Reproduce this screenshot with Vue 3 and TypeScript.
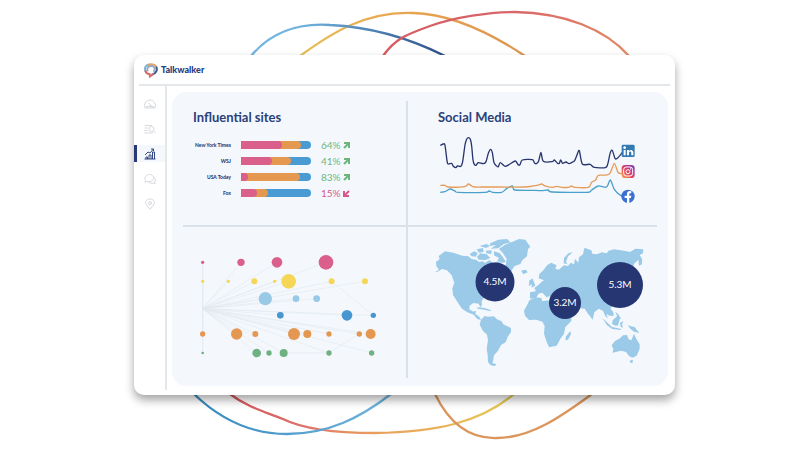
<script setup lang="ts">
type Point = [number, number]

interface Site {
  name: string
  first: number
  second: number
  share: string
  up: boolean
}

interface Dot {
  x: number
  y: number
  r: number
  tone: string
}

const sites: Site[] = [
  { name: 'New York Times', first: 58, second: 85, share: '64%', up: true },
  { name: 'WSJ', first: 44, second: 72, share: '41%', up: true },
  { name: 'USA Today', first: 10, second: 84, share: '83%', up: true },
  { name: 'Fox', first: 23, second: 39, share: '15%', up: false },
]

function parse(source: string): Point[] {
  return source.split(' ').map((pair) => pair.split(',').map(Number) as Point)
}

// Catmull-Rom spline through every point
function smooth(source: string): string {
  const p = parse(source)
  let d = `M${p[0][0]} ${p[0][1]}`
  for (let i = 0; i < p.length - 1; i++) {
    const a = p[Math.max(i - 1, 0)]
    const b = p[i]
    const c = p[i + 1]
    const e = p[Math.min(i + 2, p.length - 1)]
    d += `C${b[0] + (c[0] - a[0]) / 7} ${b[1] + (c[1] - a[1]) / 7} ${c[0] - (e[0] - b[0]) / 7} ${c[1] - (e[1] - b[1]) / 7} ${c[0]} ${c[1]}`
  }
  return d
}

const trends = [
  {
    tone: 'sky',
    d: smooth('46,277 60,275 75,267 90,273 100,277 180,277 192,273 203,277 230,277 245,266 262,258 270,270 330,271 350,272 370,270 382,276 485,277 500,270 520,258 545,261 556,240 568,268 585,285 600,292'),
  },
  {
    tone: 'orange',
    d: smooth('46,256 60,256 70,261 118,260 130,252 140,258 150,261 190,261 300,261 335,256 350,252 360,258 380,262 395,259 410,262 430,262 440,258 450,262 490,262 500,247 512,240 520,226 552,223 568,191 580,218 600,221'),
  },
  {
    tone: 'navy',
    d: smooth('46,136 55,132 60,136 66,182 69,192 80,190 85,199 93,203 97,198 108,199 113,185 120,135 125,118 130,113 136,118 140,138 144,180 148,193 153,196 160,188 175,191 183,185 190,160 197,148 202,158 207,188 215,198 220,200 226,188 240,199 255,192 271,183 280,195 285,194 292,180 322,179 328,188 334,191 341,183 348,157 355,184 382,185 388,180 398,190 403,190 407,180 413,190 423,186 432,191 443,186 449,182 456,165 463,152 472,192 495,193 508,202 541,203 548,193 556,158 562,151 570,175 578,174 594,155'),
  },
]

const dots: Dot[] = [
  { x: 38, y: 49, r: 5, tone: 'pink' },
  { x: 153, y: 49, r: 11, tone: 'pink' },
  { x: 261, y: 49, r: 16, tone: 'pink' },
  { x: 408, y: 49, r: 22, tone: 'pink' },
  { x: 38, y: 106, r: 5, tone: 'yellow' },
  { x: 115, y: 106, r: 5, tone: 'yellow' },
  { x: 193, y: 106, r: 9, tone: 'yellow' },
  { x: 254, y: 106, r: 5, tone: 'yellow' },
  { x: 296, y: 106, r: 22, tone: 'yellow' },
  { x: 425, y: 106, r: 9, tone: 'yellow' },
  { x: 525, y: 106, r: 9, tone: 'yellow' },
  { x: 226, y: 158, r: 20, tone: 'light' },
  { x: 318, y: 158, r: 10, tone: 'light' },
  { x: 380, y: 158, r: 10, tone: 'light' },
  { x: 271, y: 208, r: 10, tone: 'blue' },
  { x: 471, y: 208, r: 16, tone: 'blue' },
  { x: 550, y: 208, r: 8, tone: 'blue' },
  { x: 38, y: 264, r: 8, tone: 'orange' },
  { x: 140, y: 264, r: 17, tone: 'orange' },
  { x: 196, y: 264, r: 9, tone: 'orange' },
  { x: 312, y: 264, r: 18, tone: 'orange' },
  { x: 352, y: 264, r: 12, tone: 'orange' },
  { x: 417, y: 264, r: 8, tone: 'orange' },
  { x: 508, y: 264, r: 8, tone: 'orange' },
  { x: 542, y: 264, r: 15, tone: 'orange' },
  { x: 38, y: 321, r: 4, tone: 'green' },
  { x: 200, y: 321, r: 13, tone: 'green' },
  { x: 237, y: 321, r: 8, tone: 'green' },
  { x: 281, y: 321, r: 12, tone: 'green' },
  { x: 417, y: 321, r: 8, tone: 'green' },
  { x: 545, y: 321, r: 8, tone: 'green' },
]

const regions = [
  { x: 495, y: 282, r: 19.5, label: '4.5M' },
  { x: 565, y: 303, r: 16, label: '3.2M' },
  { x: 620, y: 285, r: 23, label: '5.3M' },
]
</script>

<template>
  <main class="stage">
    <svg class="arcs" viewBox="0 0 800 450" aria-hidden="true">
      <defs>
        <linearGradient id="arcBlue"><stop offset=".25" stop-color="#72b5df" /><stop offset="1" stop-color="#2c4f88" /></linearGradient>
        <linearGradient id="arcGold"><stop offset="0" stop-color="#e5c05a" /><stop offset=".4" stop-color="#e9a750" /><stop offset="1" stop-color="#dd9450" /></linearGradient>
        <linearGradient id="arcRed"><stop offset="0" stop-color="#d75a5f" /><stop offset=".5" stop-color="#d7666a" /><stop offset="1" stop-color="#e38962" /></linearGradient>
        <linearGradient id="arcSky"><stop offset="0" stop-color="#3589bd" /><stop offset="1" stop-color="#72b5df" /></linearGradient>
        <linearGradient id="arcWarm"><stop offset="0" stop-color="#d3555c" /><stop offset=".25" stop-color="#dc716a" /><stop offset=".5" stop-color="#e99e5e" /><stop offset="1" stop-color="#e5cc58" /></linearGradient>
      </defs>
      <path stroke="url(#arcGold)" d="M300 56C330 34 365 11 413 13C455 14 495 36 525 56" />
      <path stroke="url(#arcBlue)" d="M251 56C272 31 300 23 330 25C375 27 415 41 445 56" />
      <path stroke="url(#arcRed)" d="M383 56C395 39 405 35 430 26C455 17 490 12 515 12C565 13 605 29 629 56" />
      <path stroke="url(#arcWarm)" d="M230 394C247 407 263 411 283 419C307 431 345 433 375 433C435 432 480 423 514 394" />
      <path stroke="url(#arcSky)" d="M194 394C222 421 252 434 287 434C328 434 360 418 391 394" />
      <path stroke="#dc955b" d="M435 394C449 423 469 439 497 438C531 438 562 416 592 394" />
    </svg>

    <section class="window">
      <header class="topbar">
        <svg class="mark" viewBox="0 0 28 30" aria-hidden="true">
          <path d="M3 16C0 9 4 4 11 3" stroke="#7fb4da" />
          <path d="M9 4C15 1 25 3 25 10" stroke="#e7a069" />
          <path d="M25 9C27 14 24 21 17 23" stroke="#3c5c93" />
          <path d="M18 22L12 27L11 22C7 22 4 20 3 16" stroke="#d46b67" />
          <path d="M7 15C5 8 10 6 15 6C21 6 23 11 20 16" stroke="#98a9bf" />
        </svg>
        <span class="brand">Talkwalker</span>
      </header>

      <div class="body">
        <nav class="rail" aria-label="Sections">
          <button type="button" aria-label="Dashboard">
            <svg viewBox="0 0 24 24"><path d="M5 20H2C-1 9 6 4 12 4C18 4 25 9 22 20H5V17H19V20M13 14L9 10M12 15H15" /></svg>
          </button>
          <button type="button" aria-label="Search results">
            <svg viewBox="0 0 24 24"><path d="M1 5H16M1 10H8M1 15H7M1 20H18M19 16L23 20" /><circle cx="15" cy="12" r="5" /></svg>
          </button>
          <button type="button" class="active" aria-label="Analytics" aria-current="page">
            <svg viewBox="0 0 24 24"><path d="M1 22H23M4 22V18H7V22M10 22V14H14V22M17 22V8H21V22M2 14L8 8L12 10L19 2M14 2H19V6" /></svg>
          </button>
          <button type="button" aria-label="Conversations">
            <svg viewBox="0 0 24 24"><path d="M5 17L2 19L3 15C-1 8 5 3 11 3C17 3 21 8 18 13C16 18 10 18 5 17M20 8C24 12 23 16 21 18L22 22L18 20C14 21 11 20 9 18" /></svg>
          </button>
          <button type="button" aria-label="Locations">
            <svg viewBox="0 0 24 24"><path d="M12 23L5 14C0 7 6 2 12 2C18 2 24 7 19 14Z" /><circle cx="12" cy="10" r="3" /></svg>
          </button>
        </nav>

        <div class="panel">
          <section class="cell sites">
            <h2>Influential sites</h2>
            <ul>
              <li v-for="site in sites" :key="site.name">
                <span class="name">{{ site.name }}</span>
                <span class="bar">
                  <span class="fill second" :style="{ width: site.second + '%' }"></span>
                  <span class="fill first" :style="{ width: site.first + '%' }"></span>
                </span>
                <span class="share" :class="{ down: !site.up }">
                  {{ site.share }}
                  <svg viewBox="0 0 14 14" aria-hidden="true">
                    <path :d="site.up ? 'M2 2H12V12M12 2L2 12' : 'M12 12H2V2M2 12L12 2'" />
                  </svg>
                </span>
              </li>
            </ul>
          </section>

          <section class="cell social">
            <h2>Social Media</h2>
            <svg class="chart" viewBox="438 130 219 80" role="img" aria-label="Mentions by network">
              <defs>
                <linearGradient id="insta" x1="0" y1="1" x2="1" y2="0">
                  <stop offset="0" stop-color="#f7b04c" /><stop offset=".4" stop-color="#e94958" /><stop offset=".7" stop-color="#b23795" /><stop offset="1" stop-color="#6a45bd" />
                </linearGradient>
              </defs>
              <g transform="translate(425 100) scale(.3333)">
                <path v-for="line in trends" :key="line.tone" class="trend" :class="line.tone" :d="line.d" />
                <g>
                  <rect x="590" y="134" width="39" height="37" rx="4" fill="#337ab0" />
                  <rect x="596" y="150" width="6" height="16" fill="#fff" />
                  <circle cx="599" cy="143" r="4" fill="#fff" />
                  <path d="M606 166V150H612V153C616 148 625 149 625 158V166H619V159C619 153 612 153 612 159V166Z" fill="#fff" />
                </g>
                <g>
                  <rect x="590" y="195" width="39" height="39" rx="10" fill="url(#insta)" />
                  <g fill="none" stroke="#fff" stroke-width="3">
                    <rect x="596" y="201" width="27" height="27" rx="8" />
                    <circle cx="609" cy="215" r="6" />
                  </g>
                  <circle cx="617" cy="207" r="2" fill="#fff" />
                </g>
                <g>
                  <circle cx="609" cy="289" r="20" fill="#3b6fd3" />
                  <path d="M606 309V294H599V287H606V282C606 275 611 272 619 274V280C615 279 613 280 613 283V287H619L618 294H613V309Z" fill="#fff" />
                </g>
              </g>
            </svg>
          </section>

          <section class="cell network">
            <svg class="chart" viewBox="183 246 223 112" role="img" aria-label="Propagation network">
              <g transform="translate(190 245) scale(.3333)">
                <path class="links" d="M38 49V321M425 106L550 208M281 321H417L508 264" />
                <path v-for="(dot, i) in dots" :key="'l' + i" class="links" :d="`M38 188L${dot.x} ${dot.y}`" />
                <circle v-for="(dot, i) in dots" :key="'d' + i" :class="dot.tone" :cx="dot.x" :cy="dot.y" :r="dot.r" />
              </g>
            </svg>
          </section>

          <section class="cell map">
            <svg class="chart" viewBox="408 231 249 144" role="img" aria-label="Mentions by region">
              <g class="land" transform="translate(425 230) scale(.3333)">
                <path d="M30 126L42 119L34 109L33 95L44 88L41 78L60 64L85 68L112 77L130 79L140 87L155 90L162 96L174 94L180 99L193 90L204 98L220 94L240 110L250 130L268 145L258 165L240 175L215 190L178 202L170 213L171 226L166 231L161 221L145 219L134 227L133 238L145 245L153 242L151 252L163 260L168 270L157 267L146 254L127 247L111 236L96 214L84 195L82 175L88 158L80 136L66 121L51 117L38 125Z" />
                <path d="M134 72L148 64L158 69L153 80L140 79ZM156 80L166 70L185 73L196 84L181 90L161 89ZM155 58L174 54L176 65L162 68ZM164 48L185 42L195 48L183 54ZM183 62L200 61L199 72L184 70ZM196 40L220 29L246 27L257 37L236 42L220 55L197 56L213 45L194 48ZM207 64L224 69L233 80L243 96L229 99L217 91L222 84L207 76Z" />
                <path d="M222 57L240 44L263 35L282 27L301 29L316 50L309 57L306 79L292 91L286 102L268 109L257 126L248 123L242 106L245 87L233 68Z" />
                <path d="M289 122L303 119L308 127L296 132ZM157 232L176 233L197 240L197 244L178 239L158 236Z" />
                <path d="M168 269L179 258L188 260L207 259L216 268L230 274L235 283L258 294L258 307L249 319L242 337L229 344L218 364L207 376L205 390L202 399L214 403L210 408L197 406L189 396L188 374L185 357L189 330L186 314L174 303L164 284Z" />
              </g>
              <g class="land" transform="translate(520 230) scale(.3333)">
                <path d="M30 206L30 187L48 184L43 174L55 165L65 155L72 151L56 145L58 132L70 121L82 105L94 98L110 106L106 116L116 119L132 106L144 108L152 98L162 103L165 86L175 98L177 82L189 73L193 53L214 61L217 71L231 73L245 67L260 70L266 62L282 58L317 63L330 66L346 56L370 58L369 70L359 75L366 86L366 103L357 107L355 89L342 102L336 125L342 146L340 180L330 204L313 216L290 225L275 229L272 236L280 247L281 258L269 257L259 252L264 265L256 259L249 242L236 236L223 247L218 269L203 250L194 236L174 235L163 246L151 264L135 265L114 238L109 222L96 207L95 198L79 201L73 188L85 190L82 204L67 188L55 191L49 203Z" />
                <path d="M27 153L37 145L42 157L46 167L34 173L36 163L26 168L28 158Z" />
                <path d="M28 211L47 202L64 204L67 214L83 211L100 219L118 240L132 260L154 263L154 273L136 291L132 312L122 325L110 347L87 352L79 333L72 311L74 288L67 275L49 269L27 270L15 257L12 242L21 226Z" />
                <path d="M137 320L151 303L153 312L145 328L137 332ZM131 100L132 84L145 70L158 67L144 79L138 96L143 103Z" />
                <path d="M247 264L260 276L276 291L302 296L303 300L277 297L261 286ZM276 281L278 271L291 259L299 267L294 287L282 286ZM300 278L311 274L306 283L309 293L302 290ZM323 286L333 289L344 291L358 309L342 305L331 296ZM286 245L295 253L304 268L294 265Z" />
                <path d="M275 346L284 334L300 325L309 316L321 315L326 328L334 331L342 311L348 325L359 343L359 356L350 377L337 383L328 379L318 366L303 362L278 368L280 357ZM330 391L339 390L337 400L331 398Z" />
                <path d="M4 123L16 119L21 126L9 131Z" />
              </g>
              <g v-for="region in regions" :key="region.label">
                <circle class="bubble" :cx="region.x" :cy="region.y" :r="region.r" />
                <text :x="region.x" :y="region.y + 3">{{ region.label }}</text>
              </g>
            </svg>
          </section>
        </div>
      </div>
    </section>
  </main>
</template>

<style>
body {
  margin: 0;
  background: #fff;
}
</style>

<style scoped>
* {
  box-sizing: border-box;
}

.stage {
  position: relative;
  min-height: 100vh;
  padding: 55px 15.625% 55px 16.75%;
  overflow: hidden;
  font-family: Lato, "Liberation Sans", sans-serif;
  color: #2b4078;
}

.arcs {
  position: absolute;
  inset: 0;
  width: 100%;
  height: 100%;
}

.arcs path {
  fill: none;
  stroke-width: 2.3;
}

.window {
  position: relative;
  background: #fff;
  border-radius: 10px;
  box-shadow: 0 5px 10px rgba(0, 0, 0, 0.36);
}

.topbar {
  display: flex;
  align-items: center;
  gap: 3px;
  height: 31px;
  margin: 0 5px;
  padding: 1px 5px 0;
  border-bottom: 2px solid #e4e8ea;
}

.mark {
  width: 14px;
  height: 15px;
}

.mark path {
  fill: none;
  stroke-width: 4;
  stroke-linecap: round;
}

.brand {
  font-size: 9px;
  line-height: 12px;
  font-weight: 900;
  color: #283c7c;
}

.body {
  display: grid;
  grid-template-columns: 33px 1fr;
}

.rail {
  display: flex;
  flex-direction: column;
  margin-bottom: 5px;
  padding-top: 5px;
  border-right: 2px solid #e4e8ea;
}

.rail button {
  display: flex;
  align-items: center;
  justify-content: center;
  width: 100%;
  height: 25px;
  padding: 0;
  border: 0;
  background: none;
  color: #d6d9dd;
  cursor: pointer;
}

.rail .active {
  height: 17px;
  margin: 4px 0;
  padding-right: 3px;
  border-left: 3px solid #283876;
  background: #f4f8fd;
  color: #344784;
}

.rail svg {
  width: 12px;
  height: 12px;
  fill: none;
  stroke: currentColor;
  stroke-width: 2;
}

.panel {
  display: grid;
  grid-template-columns: 225fr 249fr;
  grid-template-rows: auto auto;
  margin: 6px 7px 9px 5px;
  padding: 9px 11px 8px;
  border-radius: 14px;
  background: #f4f8fd;
}

.cell {
  min-height: 126px;
}

.sites,
.network {
  border-right: 2px solid #dbe1e9;
}

.sites,
.social {
  border-bottom: 2px solid #dbe1e9;
}

.sites {
  padding: 8px 10px 0;
}

.social {
  padding: 8px 0 0 30px;
}

.network,
.map {
  min-height: 151px;
}

.network {
  padding-top: 20px;
}

.map {
  padding-top: 4px;
}

h2 {
  margin: 0;
  font-size: 13px;
  line-height: 16px;
  font-weight: 700;
}

.chart {
  display: block;
  width: 100%;
}

.social .chart {
  margin-top: 5px;
}

ul {
  margin: 12px 0 0;
  padding: 0;
  list-style: none;
}

li {
  display: grid;
  grid-template-columns: 38px 70fr 75fr;
  align-items: center;
  gap: 10px;
  height: 16px;
}

.name {
  font-size: 5px;
  line-height: 8px;
  font-weight: 900;
  text-align: right;
  white-space: nowrap;
}

.bar {
  display: grid;
  height: 8px;
  overflow: hidden;
  border-radius: 0 4px 4px 0;
  background: #4a9ad4;
}

.fill {
  grid-area: 1 / 1;
  height: 8px;
  border-radius: 0 4px 4px 0;
}

.fill.second {
  background: #e5984f;
}

.fill.first {
  background: #da608b;
}

.share {
  display: flex;
  align-items: center;
  gap: 2px;
  font-size: 10px;
  line-height: 12px;
  color: #6eb57c;
}

.share.down {
  color: #d6588a;
}

.share svg {
  width: 7px;
  height: 7px;
  fill: none;
  stroke: currentColor;
  stroke-width: 4;
}

.trend {
  fill: none;
  stroke-width: 4;
  stroke-linejoin: round;
}

.trend.navy {
  stroke: #29366d;
}

.trend.orange {
  stroke: #e79b59;
}

.trend.sky {
  stroke: #4aa0cb;
}

.links {
  fill: none;
  stroke: #e3eaee;
  stroke-width: 2;
}

circle.pink {
  fill: #da5f8a;
}

circle.yellow {
  fill: #f5d657;
}

circle.light {
  fill: #98c9e6;
}

circle.blue {
  fill: #4596d1;
}

circle.orange {
  fill: #e49750;
}

circle.green {
  fill: #70b181;
}

.land {
  fill: #9acae8;
}

.bubble {
  fill: #253673;
}

.map text {
  fill: #fff;
  font-size: 10px;
  text-anchor: middle;
}
</style>
